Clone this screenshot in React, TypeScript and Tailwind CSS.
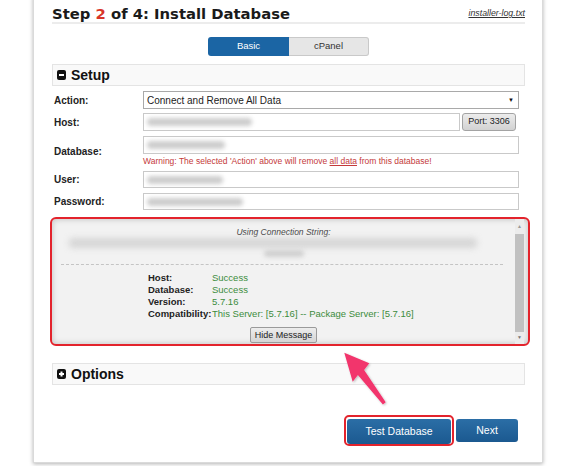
import React from "react";

const sans = { fontFamily: '"Liberation Sans", Arial, sans-serif' };
const verdana = { fontFamily: '"DejaVu Sans", Verdana, sans-serif' };

function Blur({ w }: { w: string }) {
  return <div className={`h-[8px] ${w} rounded-sm bg-[#cdcdcd] blur-[2px]`} />;
}

function Field({ h, children }: { h: string; children?: React.ReactNode }) {
  return (
    <div className={`${h} flex items-center border border-[#c9c9c9] bg-white pl-[3px]`}>
      {children}
    </div>
  );
}

function SectionHead({ title, open }: { title: string; open: boolean }) {
  return (
    <div className="flex h-[22px] items-center gap-[5px] border border-[#e4e4e4] bg-[#f9f9f9] pl-[4px]">
      <svg width="9" height="10" viewBox="0 0 9 10">
        <rect x="0" y="0" width="9" height="10" rx="2" fill="#111" />
        <rect x="2" y="4" width="5" height="2" fill="#fff" />
        {!open && <rect x="3.5" y="2.5" width="2" height="5" fill="#fff" />}
      </svg>
      <span className="text-[14px] font-bold leading-none text-[#111]">{title}</span>
    </div>
  );
}

function Row({ label, children, className }: { label: string; children: React.ReactNode; className?: string }) {
  return (
    <div className={`flex items-center ${className ?? ""}`}>
      <div className="w-[91px] pl-[2px] text-[10px] font-bold text-[#222]">{label}</div>
      <div className="mr-[6px] flex-1">{children}</div>
    </div>
  );
}

export default function App() {
  return (
    <div className="h-[466px] w-[566px] overflow-hidden bg-white" style={sans}>
      <div className="relative -mt-[4px] ml-[33px] w-[510px] border border-t-0 border-[#dadada] bg-white pb-[16px] pl-[18px] pr-[17px] pt-[4px] shadow-[0_1px_4px_rgba(0,0,0,0.3)]">
        {/* header */}
        <div className="flex items-center justify-between border-b-2 border-[#ececec] pt-[5px]">
          <h1 className="text-[14.8px] font-bold leading-[17px] text-[#1a1a1a]" style={verdana}>
            Step <span className="text-[#d8352a]">2</span> of 4: Install Database
          </h1>
          <a className="text-[8.8px] italic text-[#333] underline">installer-log.txt</a>
        </div>

        {/* tabs */}
        <div className="mt-[13px] flex justify-center text-[9.5px]">
          <div className="flex h-[19px] w-[81px] items-center justify-center rounded-l-[3px] bg-[#1b65a4] text-white">Basic</div>
          <div className="flex h-[19px] w-[80px] items-center justify-center rounded-r-[3px] border border-l-0 border-[#c9c9c9] bg-[#e6e6e6] text-[#333]">cPanel</div>
        </div>

        <div className="mt-[8px]">
          <SectionHead title="Setup" open />
        </div>

        {/* form */}
        <Row label="Action:" className="mt-[5px]">
          <div className="flex h-[18px] items-center justify-between border border-[#a9a9a9] bg-white pl-[3px] pr-[4px]">
            <span className="text-[10px] text-[#222]">Connect and Remove All Data</span>
            <span className="text-[6px] text-[#111]">▼</span>
          </div>
        </Row>

        <Row label="Host:" className="mt-[4px]">
          <div className="flex gap-[2px]">
            <div className="flex-1">
              <Field h="h-[18px]">
                <Blur w="w-[105px]" />
              </Field>
            </div>
            <button className="mr-[3px] h-[18px] w-[54px] rounded-[3px] border border-[#a3a3a3] bg-gradient-to-b from-[#ececec] to-[#d2d2d2] text-[9px] text-[#222]">
              Port: 3306
            </button>
          </div>
        </Row>

        <Row label="Database:" className="mt-[5px]">
          <Field h="h-[18px]">
            <Blur w="w-[78px]" />
          </Field>
          <p className="mt-[2px] text-[8.5px] leading-[11px] text-[#c43a3a]">
            Warning: The selected 'Action' above will remove <span className="underline">all data</span> from this database!
          </p>
        </Row>

        <Row label="User:" className="mt-[4px]">
          <Field h="h-[17px]">
            <Blur w="w-[76px]" />
          </Field>
        </Row>

        <Row label="Password:" className="mt-[5px]">
          <Field h="h-[17px]">
            <Blur w="w-[96px]" />
          </Field>
        </Row>

        {/* message */}
        <div className="-ml-[2px] -mr-[5px] mt-[7px] flex h-[129px] overflow-hidden rounded-[6px] border-2 border-[#e3232c] bg-[#f2f2f2] shadow-[inset_0_0_6px_rgba(0,0,0,0.22)]">
          <div className="flex flex-1 flex-col pt-[8px]">
            <div className="text-center text-[8.5px] italic leading-[10px] text-[#444]">Using Connection String:</div>
            <div className="mt-[1px] flex flex-col items-center">
              <div className="ml-[-22px] h-[10px] w-[408px] rounded bg-[#d6d6d6] blur-[3px]" />
              <div className="mt-[2px] h-[7px] w-[40px] rounded bg-[#d0d0d0] blur-[2px]" />
            </div>
            <div className="ml-[9px] mr-[12px] mt-[7px] border-t border-dashed border-[#c4c4c4]" />
            <div className="ml-[96px] mt-[7px] grid grid-cols-[64px_auto] text-[9.5px] leading-[12px]">
              <span className="font-bold text-[#222]">Host:</span>
              <span className="text-[#3c8c3c]">Success</span>
              <span className="font-bold text-[#222]">Database:</span>
              <span className="text-[#3c8c3c]">Success</span>
              <span className="font-bold text-[#222]">Version:</span>
              <span className="text-[#3c8c3c]">5.7.16</span>
              <span className="font-bold text-[#222]">Compatibility:</span>
              <span className="text-[#3c8c3c]">This Server: [5.7.16] -- Package Server: [5.7.16]</span>
            </div>
            <div className="mt-[7px] flex justify-center">
              <button className="h-[16px] w-[67px] rounded-[2px] border border-[#9a9a9a] bg-gradient-to-b from-[#ededed] to-[#d5d5d5] text-[9px] leading-none text-[#222]">
                Hide Message
              </button>
            </div>
          </div>
          <div className="mr-[4px] flex w-[9px] flex-col bg-[#ececec]">
            <div className="flex h-[15px] items-center justify-center text-[5px] text-[#999]">▲</div>
            <div className="flex-1 bg-[#c1c1c1]" />
            <div className="flex h-[12px] items-center justify-center text-[5px] text-[#777]">▼</div>
          </div>
        </div>

        <div className="mt-[17px]">
          <SectionHead title="Options" open={false} />
        </div>

        {/* actions */}
        <div className="mr-[7px] mt-[30px] flex items-center justify-end gap-[2px]">
          <div className="h-[31px] w-[110px] rounded-[5px] border-2 border-[#e3232c] p-[1px]">
            <button className="h-full w-full rounded-[3px] bg-gradient-to-b from-[#2b6ea6] to-[#1b5990] text-[10.5px] text-white">
              Test Database
            </button>
          </div>
          <button className="h-[23px] w-[62px] rounded-[3px] bg-gradient-to-b from-[#2b6ea6] to-[#1b5990] text-[10.5px] text-white">
            Next
          </button>
        </div>

        {/* pointer arrow */}
        <svg className="pointer-events-none absolute left-[280px] top-[349px] h-[65px] w-[80px]" viewBox="0 0 80 65">
          <defs>
            <filter id="sh" x="-20%" y="-20%" width="140%" height="140%">
              <feDropShadow dx="1" dy="1" stdDeviation="1" floodColor="#000" floodOpacity="0.25" />
            </filter>
          </defs>
          <polygon
            points="30.3,7.7 55.3,18.3 50.1,25 71.7,57.2 68.9,59.4 43.9,30 38.7,36.7"
            fill="#f2346c"
            filter="url(#sh)"
          />
        </svg>
      </div>
    </div>
  );
}
